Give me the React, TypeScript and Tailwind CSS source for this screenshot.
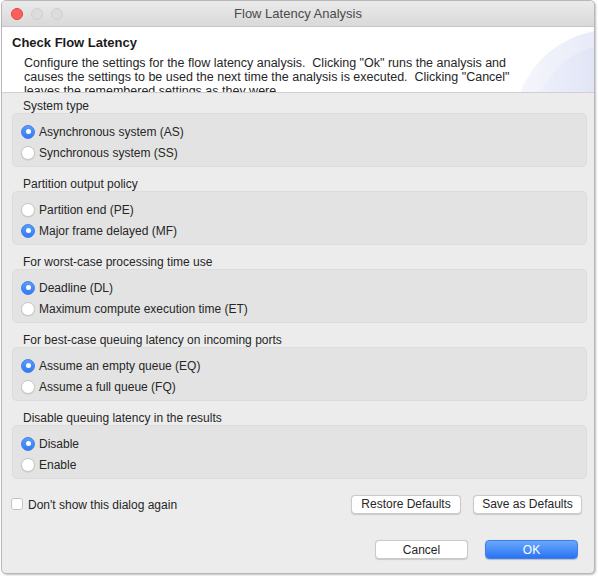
import React from "react";

const font = { fontFamily: '"Liberation Sans", Arial, sans-serif' };

function Radio({ checked, label }: { checked: boolean; label: string }) {
  return (
    <div className="flex h-[21px] items-center">
      {checked ? (
        <div className="flex h-[14px] w-[14px] items-center justify-center rounded-full border border-[#3d7ff0] bg-gradient-to-b from-[#5a9cf8] to-[#3479f3]">
          <div className="h-[5px] w-[5px] rounded-full bg-white" />
        </div>
      ) : (
        <div className="h-[14px] w-[14px] rounded-full border border-[#c8c8c8] bg-white shadow-[0_0.5px_1px_rgba(0,0,0,0.12)]" />
      )}
      <span className="ml-[4px] text-[12px] text-[#262626]">{label}</span>
    </div>
  );
}

function Section({
  title,
  options,
  selected,
}: {
  title: string;
  options: string[];
  selected: number;
}) {
  return (
    <div className="flex flex-col">
      <div className="h-[17px] pl-[11px] pt-[3px] text-[12px] leading-[14px] text-[#262626]">{title}</div>
      <div className="h-[54px] rounded-[5px] border border-[#dcdcdc] bg-[#e3e3e3] pl-[8px] pt-[7px]">
        {options.map((o, i) => (
          <Radio key={o} checked={i === selected} label={o} />
        ))}
      </div>
    </div>
  );
}

function Btn({ label, w }: { label: string; w: string }) {
  return (
    <div
      className={`flex h-[19px] items-center justify-center rounded-[4px] border border-[#cacaca] bg-white text-[12px] text-[#262626] shadow-[0_0.5px_1px_rgba(0,0,0,0.15)] ${w}`}
    >
      {label}
    </div>
  );
}

export default function App() {
  return (
    <div className="h-[576px] w-[598px] overflow-hidden bg-white" style={font}>
      <div className="ml-[1px] flex h-[574px] w-[594px] flex-col overflow-hidden rounded-[5px] border border-[#b8b8b8] bg-[#ececec] shadow-[1px_1px_2px_rgba(0,0,0,0.25)]">
        {/* title bar */}
        <div className="relative flex h-[26px] shrink-0 items-center justify-center border-b border-[#c6c6c6] bg-gradient-to-b from-[#ebebeb] to-[#d9d9d9]">
          <div className="absolute left-[9px] top-[7px] flex gap-[8px]">
            <div className="h-[12px] w-[12px] rounded-full border border-[#e0443e] bg-[#fc605c]" />
            <div className="h-[12px] w-[12px] rounded-full border border-[#cfcfcf] bg-[#dcdcdc]" />
            <div className="h-[12px] w-[12px] rounded-full border border-[#cfcfcf] bg-[#dcdcdc]" />
          </div>
          <span className="text-[13px] text-[#4a4a4a]">Flow Latency Analysis</span>
        </div>
        {/* header */}
        <div className="relative h-[66px] shrink-0 overflow-hidden border-b border-[#cfcfcf] bg-white">
          <svg className="absolute right-0 top-0" width="76" height="66" viewBox="0 0 76 66">
            <defs>
              <linearGradient id="g1" x1="0" y1="0" x2="1" y2="0">
                <stop offset="0" stopColor="#f5f6fc" />
                <stop offset="1" stopColor="#e8ebf8" />
              </linearGradient>
              <linearGradient id="g2" x1="0" y1="0" x2="1" y2="0">
                <stop offset="0" stopColor="#eef0fa" />
                <stop offset="1" stopColor="#e0e5f6" />
              </linearGradient>
            </defs>
            <path d="M2 66 Q22 16 76 4 L76 66 Z" fill="url(#g1)" />
            <path d="M22 66 Q42 28 76 20 L76 66 Z" fill="url(#g2)" />
          </svg>
          <div className="relative pl-[10px] pt-[8px] text-[13px] font-bold leading-[16px] text-[#1a1a1a]">
            Check Flow Latency
          </div>
          <div className="relative mt-[5px] whitespace-pre pl-[22px] text-[12.5px] leading-[14px] text-[#262626]">
            {'Configure the settings for the flow latency analysis.  Clicking "Ok" runs the analysis and\ncauses the settings to be used the next time the analysis is executed.  Clicking "Cancel"\nleaves the remembered settings as they were.'}
          </div>
        </div>
        {/* body */}
        <div className="flex flex-col gap-[7px] pl-[10px] pr-[7px] pt-[3px]">
          <Section
            title="System type"
            options={["Asynchronous system (AS)", "Synchronous system (SS)"]}
            selected={0}
          />
          <Section
            title="Partition output policy"
            options={["Partition end (PE)", "Major frame delayed (MF)"]}
            selected={1}
          />
          <Section
            title="For worst-case processing time use"
            options={["Deadline (DL)", "Maximum compute execution time (ET)"]}
            selected={0}
          />
          <Section
            title="For best-case queuing latency on incoming ports"
            options={["Assume an empty queue (EQ)", "Assume a full queue (FQ)"]}
            selected={0}
          />
          <Section
            title="Disable queuing latency in the results"
            options={["Disable", "Enable"]}
            selected={0}
          />
        </div>
        <div className="mt-[15px] flex items-center pl-[9px] pr-[12px]">
          <div className="h-[12px] w-[12px] rounded-[3px] border border-[#c4c4c4] bg-white" />
          <span className="ml-[5px] mt-[2px] text-[12px] text-[#262626]">Don't show this dialog again</span>
          <div className="ml-auto flex gap-[12px]">
            <Btn label="Restore Defaults" w="w-[110px]" />
            <Btn label="Save as Defaults" w="w-[109px]" />
          </div>
        </div>
        <div className="mt-[26px] flex justify-end gap-[17px] pr-[16px]">
          <Btn label="Cancel" w="w-[93px]" />
          <div className="flex h-[19px] w-[93px] items-center justify-center rounded-[4px] border border-[#3d7ff0] bg-gradient-to-b from-[#69a8fb] to-[#2a73f2] text-[12px] text-white shadow-[0_0.5px_1px_rgba(0,0,0,0.2)]">
            OK
          </div>
        </div>
      </div>
    </div>
  );
}
